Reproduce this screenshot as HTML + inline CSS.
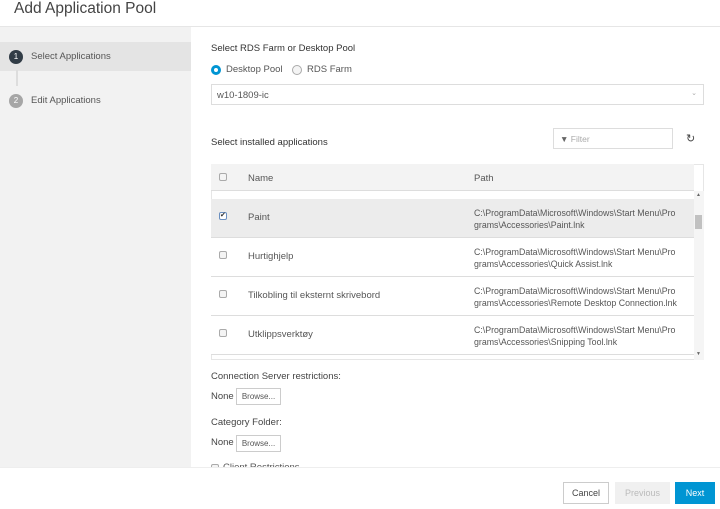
<!DOCTYPE html>
<html><head><style>
*{box-sizing:border-box;margin:0;padding:0}
body{width:720px;height:509px;overflow:hidden;font-family:"Liberation Sans",sans-serif;color:#565656;background:#fff;position:relative;font-size:9.5px}
.abs{position:absolute}
.cb{position:absolute;width:8px;height:8px;border:1px solid #aaa;border-radius:2px;background:#f4f4f4}
.row{position:absolute;left:211px;width:483px;height:39px;border-bottom:1px solid #ddd;background:#fff}
.row .n{position:absolute;left:37px;top:13px;font-size:9.5px;color:#565656}
.row .p{position:absolute;left:263px;top:8px;font-size:8.8px;line-height:12px;color:#565656}
.btn{position:absolute;border:1px solid #ccc;background:#fff;font-size:8px;text-align:center}
</style></head><body>
<div class="abs" style="left:14px;top:0px;font-size:15.5px;color:#444">Add Application Pool</div>
<div class="abs" style="left:0;top:26px;width:720px;height:1px;background:#e6e6e6"></div>
<div class="abs" style="left:0;top:27px;width:191px;height:440px;background:#f2f2f2"></div>
<div class="abs" style="left:0;top:42px;width:191px;height:29px;background:#e4e4e4"></div>
<div class="abs" style="left:16px;top:70px;width:2px;height:16px;background:#ddd"></div>
<div class="abs" style="left:9px;top:50px;width:14px;height:14px;border-radius:50%;background:#313c46;color:#fff;font-size:8px;text-align:center;line-height:14px">1</div>
<div class="abs" style="left:31px;top:51px">Select Applications</div>
<div class="abs" style="left:9px;top:94px;width:14px;height:14px;border-radius:50%;background:#a6a6a6;color:#fff;font-size:8px;text-align:center;line-height:14px">2</div>
<div class="abs" style="left:31px;top:95px">Edit Applications</div>

<div class="abs" style="left:211px;top:43px;color:#333">Select RDS Farm or Desktop Pool</div>
<div class="abs" style="left:211px;top:65px;width:10px;height:10px;border-radius:50%;border:3px solid #0095d3;background:#fff"></div>
<div class="abs" style="left:226px;top:64px">Desktop Pool</div>
<div class="abs" style="left:292px;top:65px;width:10px;height:10px;border-radius:50%;border:1px solid #aaa;background:#f4f4f4"></div>
<div class="abs" style="left:307px;top:64px">RDS Farm</div>
<div class="abs" style="left:211px;top:84px;width:493px;height:21px;border:1px solid #ddd;padding:5px 5px">w10-1809-ic<span style="position:absolute;right:6px;top:4px;color:#aaa;font-size:7px">&#8964;</span></div>

<div class="abs" style="left:211px;top:137px;color:#333">Select installed applications</div>
<div class="abs" style="left:553px;top:128px;width:120px;height:21px;border:1px solid #ddd;font-size:8.5px;color:#aaa;padding:5px 6px"><span style="color:#666">&#9660;</span> Filter</div>
<div class="abs" style="left:686px;top:132px;font-size:11px;color:#444">&#8635;</div>

<div class="abs" style="left:211px;top:164px;width:493px;height:196px;border:1px solid #e6e6e6"></div>
<div class="abs" style="left:211px;top:164px;width:483px;height:27px;background:#f3f3f3;border-bottom:1px solid #ddd"></div>
<div class="cb" style="left:219px;top:173px"></div>
<div class="abs" style="left:248px;top:173px">Name</div>
<div class="abs" style="left:474px;top:173px">Path</div>

<div class="row" style="top:199px;background:#ececec"><div class="cb" style="left:8px;top:13px;border-color:#6a8fc0;background:#fff;font-size:7px;line-height:6px;color:#333">&#10004;</div><div class="n">Paint</div><div class="p">C:\ProgramData\Microsoft\Windows\Start Menu\Pro<br>grams\Accessories\Paint.lnk</div></div>
<div class="row" style="top:238px"><div class="cb" style="left:8px;top:13px"></div><div class="n">Hurtighjelp</div><div class="p">C:\ProgramData\Microsoft\Windows\Start Menu\Pro<br>grams\Accessories\Quick Assist.lnk</div></div>
<div class="row" style="top:277px"><div class="cb" style="left:8px;top:13px"></div><div class="n">Tilkobling til eksternt skrivebord</div><div class="p">C:\ProgramData\Microsoft\Windows\Start Menu\Pro<br>grams\Accessories\Remote Desktop Connection.lnk</div></div>
<div class="row" style="top:316px"><div class="cb" style="left:8px;top:13px"></div><div class="n">Utklippsverktøy</div><div class="p">C:\ProgramData\Microsoft\Windows\Start Menu\Pro<br>grams\Accessories\Snipping Tool.lnk</div></div>
<div class="abs" style="left:694px;top:191px;width:10px;height:169px;background:#f5f5f5"></div>
<div class="abs" style="left:695px;top:215px;width:7px;height:14px;background:#c1c1c1"></div>
<div class="abs" style="left:696px;top:192px;font-size:5px;color:#666">&#9650;</div>
<div class="abs" style="left:696px;top:351px;font-size:5px;color:#666">&#9660;</div>

<div class="abs" style="left:211px;top:371px;color:#444">Connection Server restrictions:</div>
<div class="abs" style="left:211px;top:391px;color:#444">None</div>
<div class="btn" style="left:236px;top:388px;width:45px;height:17px;line-height:15px">Browse...</div>
<div class="abs" style="left:211px;top:417px;color:#444">Category Folder:</div>
<div class="abs" style="left:211px;top:437px;color:#444">None</div>
<div class="btn" style="left:236px;top:435px;width:45px;height:17px;line-height:15px">Browse...</div>
<div class="cb" style="left:211px;top:464px"></div>
<div class="abs" style="left:223px;top:462px;height:5px;overflow:hidden">Client Restrictions</div>

<div class="abs" style="left:0;top:467px;width:720px;height:42px;background:#fff;border-top:1px solid #eee"></div>
<div class="btn" style="left:563px;top:482px;width:46px;height:22px;line-height:20px;font-size:9px;color:#444">Cancel</div>
<div class="abs" style="left:615px;top:482px;width:55px;height:22px;background:#f0f0f0;color:#bbb;font-size:9px;text-align:center;line-height:22px">Previous</div>
<div class="abs" style="left:675px;top:482px;width:40px;height:22px;background:#0095d3;color:#fff;font-size:9px;text-align:center;line-height:22px">Next</div>
</body></html>
